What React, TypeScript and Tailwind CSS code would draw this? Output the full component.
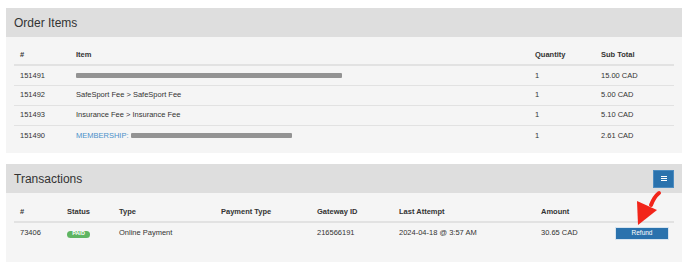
import React from 'react';

const font = { fontFamily: '"Liberation Sans", Arial, sans-serif' };

const orderItems = [
  { id: '151491', item: null, qty: '1', total: '15.00 CAD' },
  { id: '151492', item: 'SafeSport Fee > SafeSport Fee', qty: '1', total: '5.00 CAD' },
  { id: '151493', item: 'Insurance Fee > Insurance Fee', qty: '1', total: '5.10 CAD' },
  { id: '151490', item: 'link', qty: '1', total: '2.61 CAD' },
];

// Gray bar that hides redacted text
const Redacted: React.FC<{ w: string }> = ({ w }) => (
  <span className={`inline-block align-middle h-[5px] rounded-[1px] bg-[#939393] ${w}`} />
);

const App: React.FC = () => {
  return (
    <div className="relative w-[688px] h-[269px] bg-white px-[6px] pt-[8px] text-[#333]" style={font}>
      {/* Order Items panel */}
      <div>
        <div className="h-[29px] bg-[#dedede] px-[8px] flex items-center text-[12px]">Order Items</div>
        <div className="h-[116px] bg-[#f5f5f5] px-[8px] pt-[8px]">
          <table className="w-[660px] table-fixed border-collapse text-[7.5px]">
            <colgroup>
              <col className="w-[56px]" />
              <col className="w-[459px]" />
              <col className="w-[66px]" />
              <col className="w-[79px]" />
            </colgroup>
            <thead>
              <tr className="h-[20px] border-b-2 border-[#e2e2e2] font-bold text-left">
                <th className="pl-[6px]">#</th>
                <th className="pl-[6px]">Item</th>
                <th className="pl-[6px]">Quantity</th>
                <th className="pl-[6px]">Sub Total</th>
              </tr>
            </thead>
            <tbody>
              {orderItems.map((row, i) => (
                <tr key={row.id} className={`h-[20px] ${i > 0 ? 'border-t border-[#e2e2e2]' : ''}`}>
                  <td className="pl-[6px]">{row.id}</td>
                  <td className="pl-[6px]">
                    {row.item === null ? (
                      <Redacted w="w-[266px]" />
                    ) : row.item === 'link' ? (
                      <span className="text-[#4a90c9]">
                        MEMBERSHIP: <Redacted w="w-[161px]" />
                      </span>
                    ) : (
                      row.item
                    )}
                  </td>
                  <td className="pl-[6px]">{row.qty}</td>
                  <td className="pl-[6px]">{row.total}</td>
                </tr>
              ))}
            </tbody>
          </table>
        </div>
      </div>

      {/* Transactions panel */}
      <div className="mt-[11px]">
        <div className="h-[29px] bg-[#dedede] px-[8px] flex items-center justify-between text-[12px]">
          <span>Transactions</span>
          <button className="w-[21px] h-[18px] bg-[#2a72ad] border border-[#4d8cc0] flex items-center justify-center">
            <svg width="6" height="5" viewBox="0 0 6 5">
              <path d="M0 0.5h6M0 2.5h6M0 4.5h6" stroke="white" strokeWidth="1" />
            </svg>
          </button>
        </div>
        <div className="h-[69px] bg-[#f5f5f5] px-[8px] pt-[9px]">
          <table className="w-[660px] table-fixed border-collapse text-[7.5px]">
            <colgroup>
              <col className="w-[47px]" />
              <col className="w-[52px]" />
              <col className="w-[102px]" />
              <col className="w-[96px]" />
              <col className="w-[82px]" />
              <col className="w-[142px]" />
              <col className="w-[74px]" />
              <col className="w-[65px]" />
            </colgroup>
            <thead>
              <tr className="h-[20px] border-b-2 border-[#e2e2e2] font-bold text-left">
                <th className="pl-[6px]">#</th>
                <th className="pl-[6px]">Status</th>
                <th className="pl-[6px]">Type</th>
                <th className="pl-[6px]">Payment Type</th>
                <th className="pl-[6px]">Gateway ID</th>
                <th className="pl-[6px]">Last Attempt</th>
                <th className="pl-[6px]">Amount</th>
                <th></th>
              </tr>
            </thead>
            <tbody>
              <tr className="h-[21px]">
                <td className="pl-[6px]">73406</td>
                <td className="pl-[6px]">
                  <span className="inline-flex items-center justify-center w-[23px] h-[7px] rounded-full bg-[#5fb562] text-white text-[5.5px] font-bold leading-none">
                    PAID
                  </span>
                </td>
                <td className="pl-[6px]">Online Payment</td>
                <td className="pl-[6px]"></td>
                <td className="pl-[6px]">216566191</td>
                <td className="pl-[6px]">2024-04-18 @ 3:57 AM</td>
                <td className="pl-[6px]">30.65 CAD</td>
                <td className="pl-[6px]">
                  <button className="w-[54px] h-[13px] bg-[#2a72ad] border border-[#d6e4f0] text-white text-[6.5px] flex items-center justify-center">
                    Refund
                  </button>
                </td>
              </tr>
            </tbody>
          </table>
        </div>
      </div>

      {/* Red annotation arrow */}
      <svg className="absolute left-[630px] top-[188px]" width="35" height="40" viewBox="0 0 35 40">
        <path d="M29 5 Q24 9 21 17" stroke="#f2251a" strokeWidth="4" fill="none" strokeLinecap="round" />
        <polygon points="7,13 27,22 8,37" fill="#f2251a" />
      </svg>
    </div>
  );
};

export default App;
